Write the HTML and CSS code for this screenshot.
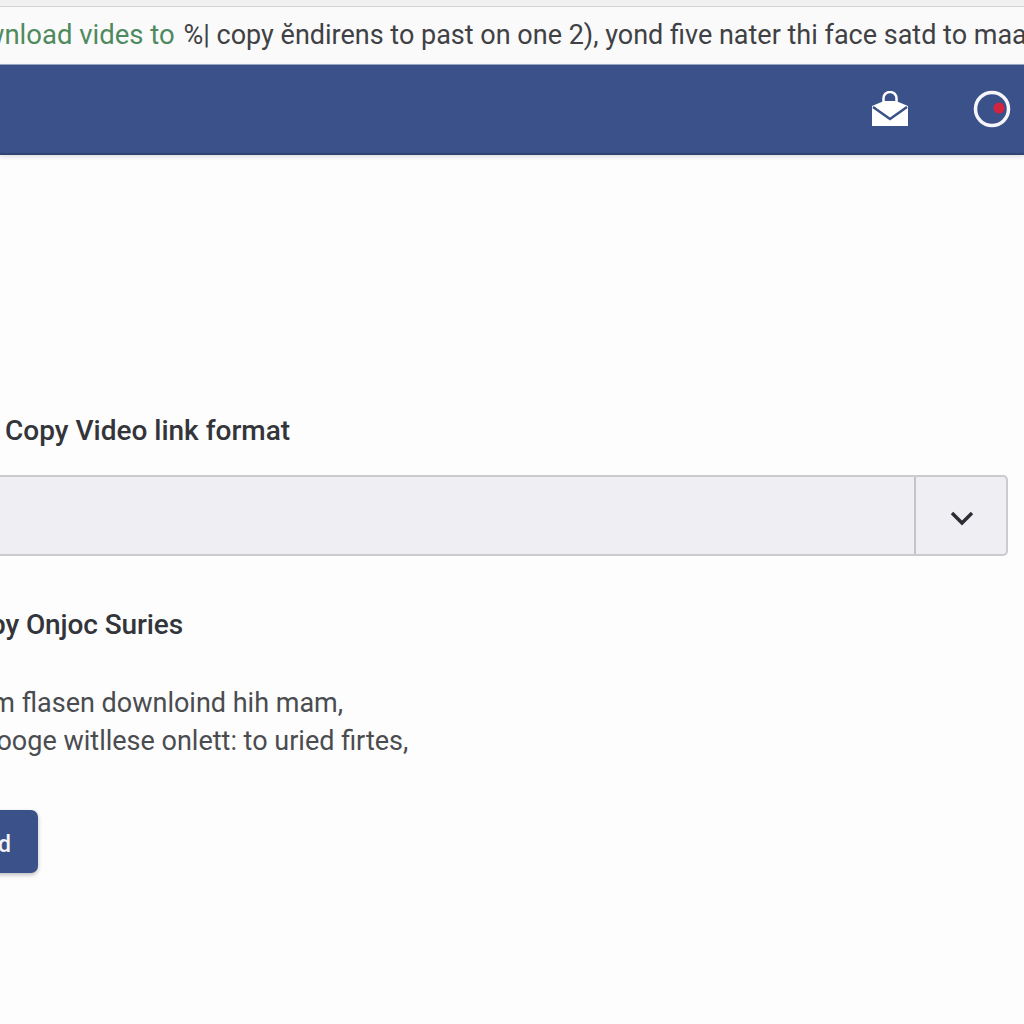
FILE: index.html
```html
<!DOCTYPE html>
<html lang="en" dir="ltr">
	<head>
		<meta charset="utf-8">
		<title>Copy Video link format</title>
		<link rel="stylesheet" href="styles.css">
	</head>
	<body>
		<div class="notice">
			<span class="notice-text"><span class="green">Download vides to</span> %| copy ĕndirens to past on one 2), yond five nater thi face satd to maa</span>
		</div>
		<div class="topbar">
			<svg class="icon-bag" width="38" height="36" viewBox="0 0 38 36">
				<path d="M12.5 12 V7 a6.5 6 0 0 1 13 0 V12" fill="none" stroke="#fff" stroke-width="2.5"/>
				<path d="M1 15 L13 10 H25 L37 15 V35 H1 Z" fill="#fff"/>
				<path d="M2 16 L19 28 L36 16" fill="none" stroke="#3a5189" stroke-width="2.5"/>
			</svg>
			<svg class="icon-record" width="38" height="38" viewBox="0 0 38 38">
				<circle cx="19" cy="19" r="16.5" fill="none" stroke="#f6f6fa" stroke-width="3.5"/>
				<circle cx="26" cy="18" r="5.5" fill="#d3233f"/>
			</svg>
		</div>
		<div class="content">
			<label class="field-label">Copy Video link format</label>
			<div class="select">
				<div class="select-value"></div>
				<div class="select-btn">
					<svg class="chevron" width="28" height="18" viewBox="0 0 28 18">
						<path d="M4 4 L14 14 L24 4" fill="none" stroke="#2b2d33" stroke-width="3.4"/>
					</svg>
				</div>
			</div>
			<h2 class="section-title">Copy Onjoc Suries</h2>
			<p class="desc first">Them flasen downloind hih mam,</p>
			<p class="desc second">A booge witllese onlett: to uried firtes,</p>
			<button class="btn">Send</button>
		</div>
	</body>
</html>
```

FILE: styles.css
```css
html, body {
	margin: 0;
	height: 100%;
	overflow: hidden;
}

body {
	width: 1024px;
	height: 1024px;
	background: #fdfdfd;
	font-family: Roboto, "Liberation Sans", sans-serif;
	color: #3f4145;
}

.notice {
	height: 57px;
	margin-top: 6px;
	border-top: 1px solid #d4d4d4;
	background: #fafafa;
	box-shadow: 0 -6px 0 #f1f1f1;
	display: flex;
	align-items: center;
	overflow: hidden;
	white-space: nowrap;
}

.notice-text {
	margin-left: -50px;
	margin-top: -3px;
	font-size: 27px;
}

.green {
	margin-right: 2px;
	font-size: 27.5px;
	color: #4f8a5e;
}

.topbar {
	height: 88px;
	background: #3a5189;
	border-top: 1px solid #9aa6c0;
	border-bottom: 2px solid #2f4273;
	display: flex;
	align-items: center;
	justify-content: flex-end;
	gap: 64px;
	padding-right: 13px;
	box-shadow: 0 2px 4px rgba(0, 0, 0, 0.12);
}

.content {
	padding-top: 257px;
}

.field-label {
	display: block;
	margin-left: 5px;
	font-size: 28px;
	font-weight: 500;
	line-height: 38px;
	color: #33353a;
}

.select {
	display: flex;
	height: 81px;
	width: 1008px;
	margin-top: 25px;
	background: #efeef3;
	border: 2px solid #cbcbce;
	border-left: 0;
	border-radius: 0 5px 5px 0;
	box-sizing: border-box;
}

.select-value {
	flex: 1;
}

.select-btn {
	width: 90px;
	border-left: 2px solid #c4c4c8;
	display: flex;
	align-items: center;
	justify-content: center;
}

.chevron {
	margin-top: 5px;
	margin-left: 2px;
}

.section-title {
	margin: 50px 0 0 -44px;
	font-size: 28px;
	font-weight: 500;
	letter-spacing: -0.1px;
	line-height: 38px;
	color: #33353a;
}

.desc {
	margin: 0;
	font-size: 27px;
	line-height: 38px;
	color: #4a4c50;
}

.desc.first {
	margin: 40px 0 0 -54px;
}

.desc.second {
	margin-left: -43px;
}

.btn {
	display: block;
	margin: 50px 0 0 -60px;
	width: 98px;
	height: 63px;
	border: 0;
	border-radius: 7px;
	background: #3a5189;
	color: #f4f4f8;
	font-family: inherit;
	font-size: 23px;
	font-weight: 500;
	text-align: right;
	padding: 5px 27px 0 0;
	box-shadow: 0 2px 4px rgba(0, 0, 0, 0.25);
}
```
